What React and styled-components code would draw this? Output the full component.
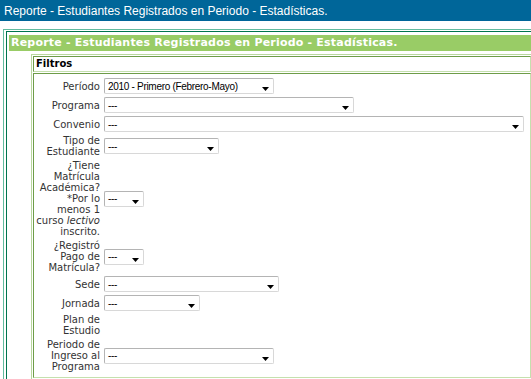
import React from "react";
import styled, { createGlobalStyle } from "styled-components";

const GlobalStyle = createGlobalStyle`
  html, body {
    margin: 0;
    padding: 0;
    overflow: hidden;
    background: #ffffff;
  }
`;

const filas = [
  { label: "Período", value: "2010 - Primero (Febrero-Mayo)", width: 170 },
  { label: "Programa", value: "---", width: 250 },
  { label: "Convenio", value: "---", width: 420 },
  { label: "Tipo de Estudiante", value: "---", width: 115 },
  {
    label: (
      <>
        ¿Tiene Matrícula Académica? *Por lo menos 1 curso <em>lectivo</em> inscrito.
      </>
    ),
    value: "---",
    width: 40,
  },
  { label: "¿Registró Pago de Matrícula?", value: "---", width: 40 },
  { label: "Sede", value: "---", width: 175 },
  { label: "Jornada", value: "---", width: 96 },
  { label: "Plan de Estudio", value: null },
  { label: "Periodo de Ingreso al Programa", value: "---", width: 170 },
];

const Arrow = () => (
  <svg width="7" height="4" viewBox="0 0 7 4">
    <polygon points="0,0 7,0 3.5,4" fill="#000000" />
  </svg>
);

const App = () => {
  return (
    <Page>
      <GlobalStyle />
      <TopBar>Reporte - Estudiantes Registrados en Periodo - Estadísticas.</TopBar>
      <Frame>
        <FrameInner>
          <GreenHeader>Reporte - Estudiantes Registrados en Periodo - Estadísticas.</GreenHeader>
          <FilterTable>
            <FilterHead>Filtros</FilterHead>
            <FilterBody>
              <Form>
                {filas.map((fila, i) => (
                  <React.Fragment key={i}>
                    <Label>{fila.label}</Label>
                    <Field>
                      {fila.value !== null && (
                        <SelectBox $width={fila.width}>
                          <SelectText>{fila.value}</SelectText>
                          <ArrowWrap>
                            <Arrow />
                          </ArrowWrap>
                        </SelectBox>
                      )}
                    </Field>
                  </React.Fragment>
                ))}
              </Form>
            </FilterBody>
          </FilterTable>
        </FrameInner>
      </Frame>
    </Page>
  );
};

const Page = styled.div`
  width: 560px;
`;

const TopBar = styled.div`
  height: 21px;
  display: flex;
  align-items: center;
  padding-left: 4px;
  background-color: #006699;
  color: #ffffff;
  font-family: "Liberation Sans", Arial, sans-serif;
  font-size: 12px;
`;

const Frame = styled.div`
  margin: 8px 0 0 3px;
  border: 1px solid #62bb9e;
  border-right: none;
  border-bottom: none;
  padding: 1px 0 0 2px;
`;

const FrameInner = styled.div`
  border-top: 1px solid #00754f;
  border-left: 1px solid #00754f;
  padding: 3px 0 0 2px;
`;

const GreenHeader = styled.div`
  height: 16px;
  line-height: 16px;
  padding-left: 2px;
  background-color: #99cc66;
  color: #ffffff;
  font-family: "DejaVu Sans", Verdana, sans-serif;
  font-weight: bold;
  font-size: 11px;
  letter-spacing: 0.2px;
  white-space: nowrap;
`;

const FilterTable = styled.div`
  margin: 3px 0 0 22px;
  width: 498px;
  padding: 1px;
  display: flex;
  flex-direction: column;
  gap: 1px;
  border: 1px solid;
  border-color: #b9d89e #5f8f36 #5f8f36 #b9d89e;
`;

const FilterHead = styled.div`
  height: 14px;
  line-height: 14px;
  padding-left: 2px;
  border: 1px solid;
  border-color: #6e9c48 #c5e0ae #c5e0ae #6e9c48;
  color: #000000;
  font-family: "DejaVu Sans", Verdana, sans-serif;
  font-weight: bold;
  font-size: 10px;
`;

const FilterBody = styled.div`
  padding: 4px 0 5px 1px;
  border: 1px solid;
  border-color: #6e9c48 #c5e0ae #c5e0ae #6e9c48;
`;

const Form = styled.div`
  display: grid;
  grid-template-columns: 65px 1fr;
  column-gap: 4px;
  row-gap: 3px;
  align-items: center;
`;

const Label = styled.div`
  text-align: right;
  color: #333333;
  font-family: "DejaVu Sans", Verdana, sans-serif;
  font-size: 10px;
  line-height: 11px;

  em {
    font-style: italic;
  }
`;

const Field = styled.div`
  display: flex;
  align-items: center;
  min-height: 16px;
`;

const SelectBox = styled.div`
  position: relative;
  box-sizing: border-box;
  width: ${(props) => props.$width}px;
  height: 16px;
  display: flex;
  align-items: center;
  padding-left: 3px;
  background: #ffffff;
  border: 1px solid;
  border-color: #b4b4b4 #d8d8d8 #d8d8d8 #b4b4b4;
  border-radius: 2px;
`;

const SelectText = styled.span`
  font-family: "Liberation Sans", Arial, sans-serif;
  font-size: 10px;
  letter-spacing: -0.3px;
  color: #000000;
  white-space: nowrap;
`;

const ArrowWrap = styled.span`
  position: absolute;
  right: 4px;
  bottom: 2px;
  display: flex;
`;

export default App;
